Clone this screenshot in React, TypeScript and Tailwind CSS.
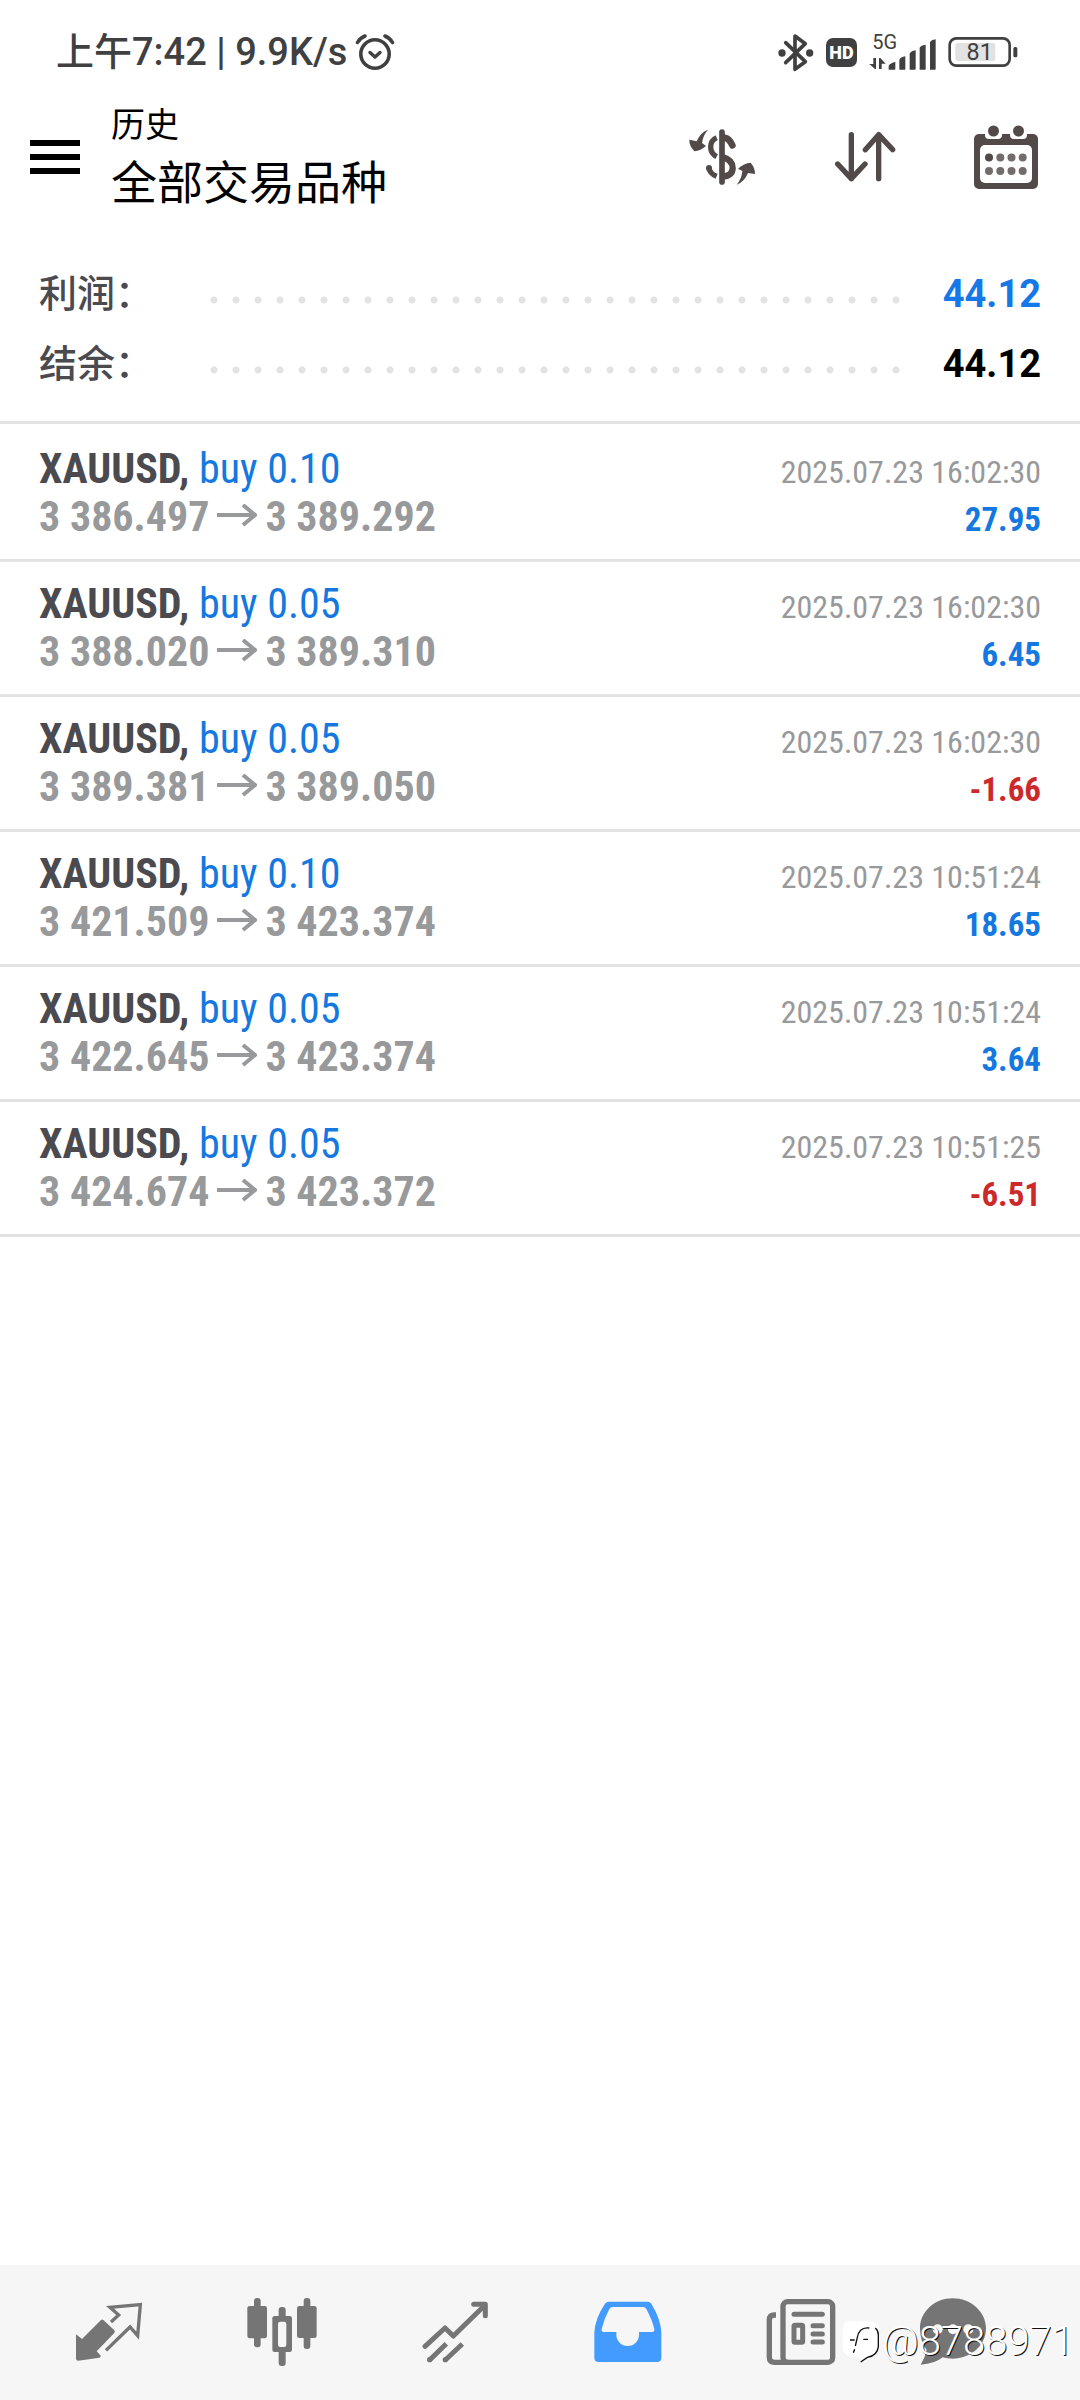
import type { ReactNode } from "react";

interface Deal {
  id: number;
  symbol: string;
  action: string;
  open: string;
  close: string;
  time: string;
  profit: string;
}

const deals: Deal[] = [
  { id: 1, symbol: "XAUUSD", action: "buy 0.10", open: "3 386.497", close: "3 389.292", time: "2025.07.23 16:02:30", profit: "27.95" },
  { id: 2, symbol: "XAUUSD", action: "buy 0.05", open: "3 388.020", close: "3 389.310", time: "2025.07.23 16:02:30", profit: "6.45" },
  { id: 3, symbol: "XAUUSD", action: "buy 0.05", open: "3 389.381", close: "3 389.050", time: "2025.07.23 16:02:30", profit: "-1.66" },
  { id: 4, symbol: "XAUUSD", action: "buy 0.10", open: "3 421.509", close: "3 423.374", time: "2025.07.23 10:51:24", profit: "18.65" },
  { id: 5, symbol: "XAUUSD", action: "buy 0.05", open: "3 422.645", close: "3 423.374", time: "2025.07.23 10:51:24", profit: "3.64" },
  { id: 6, symbol: "XAUUSD", action: "buy 0.05", open: "3 424.674", close: "3 423.372", time: "2025.07.23 10:51:25", profit: "-6.51" },
];

/* Status bar icons */

function AlarmIcon() {
  return (
    <svg width="40" height="36" viewBox="0 0 40 36" fill="none" stroke="#404040" strokeLinecap="round">
      <circle cx="20" cy="20" r="14.2" strokeWidth="3.6" />
      <path d="M15 18.5l5 4.5 5-4.5" strokeWidth="3.4" strokeLinejoin="round" />
      <path d="M2.5 8.5Q5 4 10 2M37.5 8.5Q35 4 30 2" strokeWidth="3.6" />
    </svg>
  );
}

function BluetoothIcon() {
  return (
    <svg width="36" height="39" viewBox="51 51 108 117" fill="none" stroke="#404040">
      <path
        d="M74 80L133 137L102 160V60L133 83L74 140"
        strokeWidth="11"
        strokeLinejoin="round"
        strokeLinecap="round"
      />
      <circle cx="63" cy="111" r="11" fill="#404040" stroke="none" />
      <circle cx="146" cy="111" r="11" fill="#404040" stroke="none" />
    </svg>
  );
}

function SignalIcon() {
  return (
    <svg width="67" height="48" viewBox="324 33 201 144" fill="#404040">
      <text x="334" y="97" fontSize="60" fontFamily="Roboto, sans-serif">
        5G
      </text>
      <path d="M337 123h8v33h-3l-17-15h12zM354 156v-33h4l16 17h-12v16z" />
      <path d="M383 158V147q2-8 20-13v22q0 2-2 2zM415 158V128q3-7 18-10v38q0 2-2 2zM446 158V110q3-7 18-10v56q0 2-2 2zM476 158V92q3-7 18-9v73q0 2-2 2zM507 158V76q3-7 17-9v89q0 2-2 2z" />
    </svg>
  );
}

function BatteryIcon() {
  return (
    <svg width="70" height="32" viewBox="566 63 210 96" fill="none">
      <rect x="588" y="84" width="120" height="54" rx="8" fill="#e2e2e2" />
      <rect x="571" y="70" width="180" height="82" rx="20" stroke="#404040" strokeWidth="8" />
      <rect x="762" y="96" width="12" height="31" rx="5" fill="#404040" />
      <text x="661" y="136" textAnchor="middle" fontSize="70" fill="#404040" fontFamily="Roboto, sans-serif">
        81
      </text>
    </svg>
  );
}

/* Toolbar icons */

function MenuIcon() {
  return (
    <svg width="50" height="34" viewBox="0 0 50 34" fill="#000">
      <path d="M0 0h50v6H0zM0 14h50v6H0zM0 28h50v6H0z" />
    </svg>
  );
}

function CurrencyIcon() {
  return (
    <svg width="68" height="58" viewBox="84 84 204 174" fill="none" stroke="#524a48">
      <path d="M186 96V246" strokeWidth="17" strokeLinecap="round" />
      <path d="M170 113Q152 121 152 141Q152 160 170 170" strokeWidth="16" />
      <path d="M194 113Q209 116 217 136" strokeWidth="20" strokeLinecap="round" />
      <path d="M190 172Q218 180 218 204Q218 226 190 230" strokeWidth="19" />
      <path d="M146 203Q149 221 170 229" strokeWidth="16" />
      <circle cx="147" cy="204" r="9" fill="#524a48" stroke="none" />
      <path
        d="M144 89Q121 97 110 124L88 119Q87 136 103 154Q122 152 138 138L126 129Q129 106 144 89z"
        fill="#524a48"
        stroke="none"
      />
      <path
        d="M230 254Q253 246 264 219L285 222Q286 205 272 188Q252 189 234 206L247 213Q245 237 230 254z"
        fill="#524a48"
        stroke="none"
      />
    </svg>
  );
}

function SortIcon() {
  return (
    <svg
      width="62"
      height="52"
      viewBox="522 93 186 156"
      fill="none"
      stroke="#524a48"
      strokeWidth="16"
      strokeLinecap="round"
      strokeLinejoin="round"
    >
      <path d="M574 104V236M533 192L574 236L615 192" />
      <path d="M656 236V104M616 149L656 104L698 149" />
    </svg>
  );
}

function CalendarIcon() {
  return (
    <svg width="64" height="64" viewBox="0 0 64 64" fill="#524a48">
      <rect x="0" y="9" width="64" height="55" rx="5" />
      <rect x="6" y="20" width="52" height="38" rx="5" fill="#fff" />
      <path d="M11 8h17v2q0 4-4 4h-9q-4 0-4-4zM36 8h17v2q0 4-4 4h-9q-4 0-4-4z" fill="#fff" />
      <circle cx="19.5" cy="6" r="5.5" />
      <circle cx="44.5" cy="6" r="5.5" />
      <circle cx="15" cy="32.5" r="4" />
      <g fill="#726d6c">
        <circle cx="26.3" cy="32.5" r="4" />
        <circle cx="37.5" cy="32.5" r="4" />
        <circle cx="48.7" cy="32.5" r="4" />
        <circle cx="15" cy="46" r="4" />
        <circle cx="26.3" cy="46" r="4" />
        <circle cx="37.5" cy="46" r="4" />
        <circle cx="48.7" cy="46" r="4" />
      </g>
    </svg>
  );
}

/* Bottom navigation icons */

function QuotesIcon() {
  return (
    <svg width="68" height="60" viewBox="225 187 204 180" fill="#757575">
      <path d="M228 284L246 298L303 241Q307 238 311 242L343 272Q346 276 343 280L290 335L302 348Q303 353 298 354L235 363Q228 363 228 357z" />
      <path
        d="M333 247L356 226L330 203L421 195L413 288L390 262L318 332"
        fill="none"
        stroke="#757575"
        strokeWidth="10"
      />
    </svg>
  );
}

function ChartIcon() {
  return (
    <svg width="70" height="70" viewBox="738 171 210 210" fill="#757575">
      <rect x="759" y="174" width="20" height="148" rx="9" />
      <rect x="739" y="198" width="59" height="97" rx="7" />
      <rect x="833" y="201" width="21" height="177" rx="9" />
      <rect x="814" y="228" width="59" height="108" rx="7" />
      <rect x="831" y="245" width="25" height="76" rx="7" fill="#f6f6f6" />
      <rect x="908" y="174" width="20" height="153" rx="9" />
      <rect x="888" y="198" width="59" height="96" rx="7" />
    </svg>
  );
}

function TradeIcon() {
  return (
    <svg
      width="66"
      height="62"
      viewBox="183 180 198 186"
      fill="none"
      stroke="#757575"
      strokeWidth="15"
      strokeLinejoin="round"
    >
      <path d="M192 316L252 261L277 285L370 194" strokeLinecap="round" />
      <path d="M338 190H373V224" strokeLinecap="round" />
      <path d="M206 357L256 308M253 357L304 309" />
      <g fill="#757575" stroke="none">
        <circle cx="206" cy="356" r="8" />
        <circle cx="253" cy="356" r="8" />
      </g>
    </svg>
  );
}

function HistoryIcon() {
  return (
    <svg width="68" height="62" viewBox="701 180 204 186">
      <path
        d="M746 182H862Q869 182 873 188Q902 236 903 275V350Q903 363 890 363H715Q702 363 702 350V275Q704 232 734 188Q738 182 746 182z"
        fill="#439bff"
      />
      <path
        d="M757 198H847Q855 198 858 204Q876 238 882 264Q883 273 875 273H836V281A34 34 0 0 1 768 281V273H731Q722 273 724 264Q731 234 747 204Q750 198 757 198z"
        fill="#f6f6f6"
      />
    </svg>
  );
}

function NewsIcon() {
  return (
    <svg width="70" height="68" viewBox="138 171 210 204" fill="none" stroke="#757575">
      <rect x="189" y="182" width="149" height="182" rx="14" strokeWidth="16" />
      <path d="M168 222H163Q148 222 148 237V348Q148 364 164 364H205" strokeWidth="16" />
      <path d="M222 220H307" strokeWidth="15" strokeLinecap="round" />
      <path d="M279 254H307M279 279H307M279 303H307" strokeWidth="15" strokeLinecap="round" />
      <rect x="222" y="253" width="26" height="51" rx="3" strokeWidth="15" />
    </svg>
  );
}

function ChatIcon() {
  return (
    <svg width="66" height="67" viewBox="600 173 198 201" fill="#757575">
      <path d="M698 174C752 174 798 214 798 264C798 316 752 355 698 355Q682 355 668 351Q644 371 602 373Q616 350 620 329Q600 303 600 264C600 214 644 174 698 174z" />
      <g fill="#f6f6f6">
        <circle cx="653" cy="267" r="15" />
        <circle cx="699" cy="267" r="15" />
        <circle cx="745" cy="267" r="15" />
      </g>
    </svg>
  );
}

function SummaryRow({
  label,
  value,
  valueClass,
}: {
  label: string;
  value: string;
  valueClass: string;
}) {
  return (
    <div className="flex h-[70px] items-center">
      <dt className="w-[164px] text-[38px] font-medium text-[#4b4a4f]">{label}</dt>
      <dd className="flex flex-1 items-center">
        <span className="mt-3 h-2 flex-1 bg-[radial-gradient(circle,#e3e3e3_3px,transparent_4px)] bg-[length:22px_8px] bg-repeat-x" />
        <span className={`w-[134px] text-right text-[38px] font-bold ${valueClass}`}>{value}</span>
      </dd>
    </div>
  );
}

function DealRow({ deal }: { deal: Deal }) {
  const loss = deal.profit.startsWith("-");

  return (
    <li className="border-b-3 border-[#e3e3e3] px-[39px] py-[18px] font-['Roboto_Condensed','Roboto',sans-serif]">
      <div className="flex items-baseline justify-between">
        <p className="text-[42px] leading-[48px] text-[#1478e0]">
          <span className="font-bold text-[#4b4a4f]">{deal.symbol},</span> {deal.action}
        </p>
        <time className="text-[32px] leading-[38px] text-[#98999b]">{deal.time}</time>
      </div>
      <div className="flex items-baseline justify-between">
        <p className="flex items-center gap-2 text-[42px] leading-[48px] font-bold text-[#98999b]">
          {deal.open}
          <svg width="40" height="26" viewBox="0 0 40 26" fill="none" stroke="currentColor" strokeWidth="4">
            <path d="M0 11H38M26 1L38 11L26 21" />
          </svg>
          {deal.close}
        </p>
        <span
          className={
            loss
              ? "text-[33px] leading-[38px] font-bold text-[#cc2a2a]"
              : "text-[33px] leading-[38px] font-bold text-[#1478e0]"
          }
        >
          {deal.profit}
        </span>
      </div>
    </li>
  );
}

function NavItem({ label, children, last }: { label: string; children: ReactNode; last?: boolean }) {
  return (
    <a
      href="#"
      aria-label={label}
      className={last ? "flex w-[132px] items-center justify-center" : "flex flex-1 items-center justify-center"}
    >
      {children}
    </a>
  );
}

export default function App() {
  return (
    <div className="flex min-h-screen flex-col bg-white font-['Roboto','Noto_Sans_CJK_SC',sans-serif]">
      {/* Status bar */}

      <div className="flex h-[104px] items-center justify-between pr-[62px] pl-[56px] text-[#404040]">
        <div className="flex items-center gap-2 text-[38px] font-medium">
          <span>上午7:42 | 9.9K/s</span>
          <AlarmIcon />
        </div>

        <div className="flex items-center gap-3">
          <BluetoothIcon />
          <span className="flex h-[29px] w-[31px] items-center justify-center rounded-[7px] bg-[#404040] text-[18px] font-black text-white">
            HD
          </span>
          <SignalIcon />
          <BatteryIcon />
        </div>
      </div>

      {/* Toolbar */}

      <header className="flex h-[104px] items-center justify-between pt-[2px] pr-[42px] pl-[30px]">
        <div className="flex items-center gap-[31px]">
          <button type="button" aria-label="菜单">
            <MenuIcon />
          </button>
          <div>
            <p className="text-[34px] leading-[52px]">历史</p>
            <h1 className="text-[46px] leading-[64px]">全部交易品种</h1>
          </div>
        </div>

        <div className="flex items-center gap-[78px]">
          <button type="button" aria-label="货币">
            <CurrencyIcon />
          </button>
          <button type="button" aria-label="排序">
            <SortIcon />
          </button>
          <button type="button" aria-label="日期">
            <CalendarIcon />
          </button>
        </div>
      </header>

      {/* History */}

      <main className="flex-1">
        <dl className="border-b-3 border-[#e3e3e3] px-[39px] pt-[51px] pb-[22px]">
          <SummaryRow label="利润：" value="44.12" valueClass="text-[#1478e8]" />
          <SummaryRow label="结余：" value="44.12" valueClass="text-black" />
        </dl>

        <ul className="pt-[3px]">
          {deals.map((deal) => (
            <DealRow key={deal.id} deal={deal} />
          ))}
        </ul>
      </main>

      {/* Bottom navigation */}

      <nav className="relative flex h-[135px] bg-[#f6f6f6] pr-[61px] pb-[2px] pl-[22px]">
        <NavItem label="行情">
          <QuotesIcon />
        </NavItem>
        <NavItem label="图表">
          <ChartIcon />
        </NavItem>
        <NavItem label="交易">
          <TradeIcon />
        </NavItem>
        <NavItem label="历史">
          <HistoryIcon />
        </NavItem>
        <NavItem label="新闻">
          <NewsIcon />
        </NavItem>
        <NavItem label="消息" last>
          <ChatIcon />
        </NavItem>

        {/* User stamp over the bar */}
        <div className="absolute right-[6px] bottom-[34px] flex items-center text-[40px] leading-[48px] font-light text-white [text-shadow:1px_1px_0_#111]">
          <svg width="40" height="44" viewBox="0 0 120 132" fill="none">
            <path d="M18 4H84Q111 8 111 34V78Q109 108 76 112L58 128L52 112H28Q2 108 2 82V26Q4 8 18 4z" fill="#fff" />
            <path d="M100 24Q109 32 109 44V80Q106 108 76 112L56 126" stroke="#111" strokeWidth="4" />
            <path d="M82 24Q52 20 46 52L40 78M34 98L38 88M24 60H38M64 58H78" stroke="#111" strokeWidth="4" />
          </svg>
          <span>@8788971</span>
        </div>
      </nav>
    </div>
  );
}
